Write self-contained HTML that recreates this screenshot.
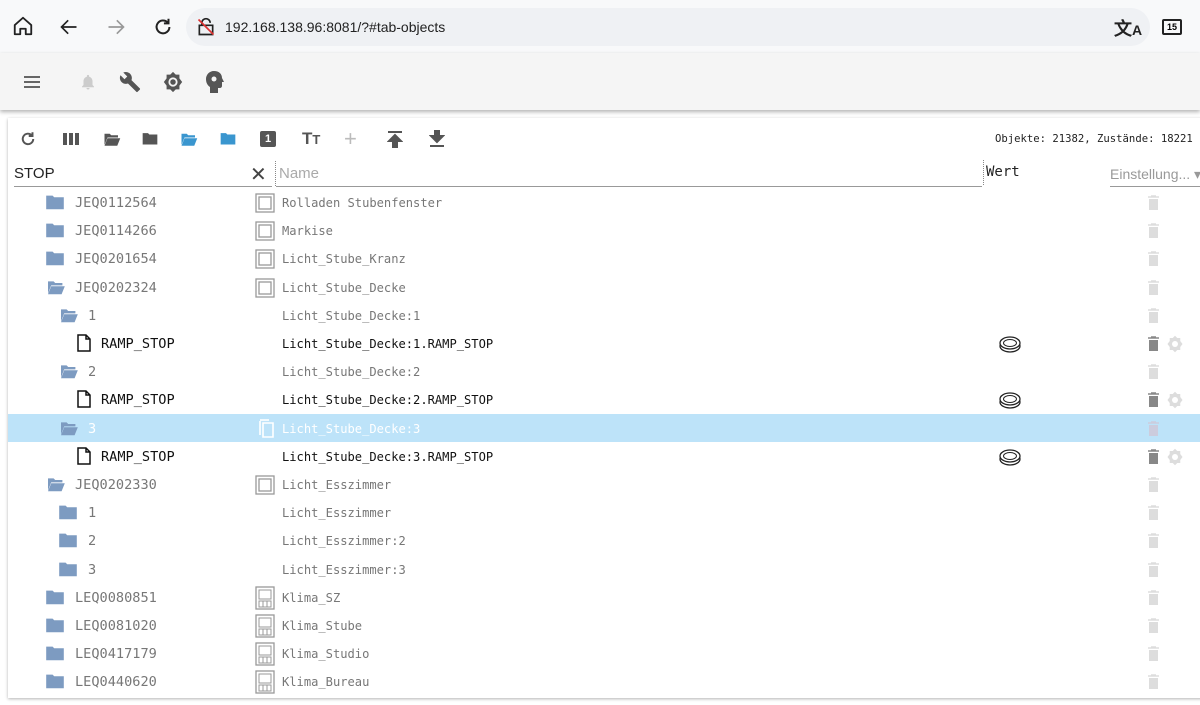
<!DOCTYPE html>
<html><head><meta charset="utf-8"><style>
*{box-sizing:border-box;margin:0;padding:0}
body{width:1200px;height:705px;overflow:hidden;background:#fff;font-family:"Liberation Sans",sans-serif;position:relative}
.a{position:absolute;white-space:nowrap}
.top{left:0;top:0;width:1200px;height:53px;background:#f8f9fa}
.addr{left:186px;top:8px;width:964px;height:38px;background:#eff1f4;border-radius:19px}
.bar{left:0;top:53px;width:1200px;height:57px;background:#f5f5f5;box-shadow:0 2px 4px rgba(0,0,0,.3)}
.card{left:8px;top:118px;width:1200px;height:580px;background:#fff;box-shadow:0 1px 3px rgba(0,0,0,.3)}
.row{position:absolute;left:8px;width:1192px;height:28px}
.t{position:absolute;top:7px;font-family:"DejaVu Sans Mono","Liberation Mono",monospace;font-size:13.6px;color:#777;white-space:nowrap}
.n{position:absolute;left:274px;top:8px;font-family:"DejaVu Sans Mono","Liberation Mono",monospace;font-size:12.1px;color:#777;white-space:nowrap}
.sel{background:#bde3f9}
svg{position:absolute}
</style></head><body>
<div class="a top"></div>
<div class="a addr"></div>
<svg style="left:12px;top:15px" width="22" height="22" viewBox="0 0 24 24"><path d="M3 11L12 3l9 8v10h-6v-6h-6v6H3z" fill="none" stroke="#222" stroke-width="2" stroke-linejoin="round"/></svg>
<svg style="left:59px;top:17px" width="20" height="20" viewBox="0 0 24 24"><path d="M21 12H4M11 4l-8 8 8 8" fill="none" stroke="#222" stroke-width="2"/></svg>
<svg style="left:106px;top:17px" width="20" height="20" viewBox="0 0 24 24"><path d="M3 12h17M13 4l8 8-8 8" fill="none" stroke="#999" stroke-width="2"/></svg>
<svg style="left:152px;top:16px" width="22" height="22" viewBox="0 0 24 24"><path d="M19 12a7 7 0 1 1-2-5M18 3v5h-5" fill="none" stroke="#222" stroke-width="2.2"/></svg>
<svg style="left:196px;top:17px" width="20" height="20" viewBox="0 0 24 24"><path d="M7 10V7a5 5 0 0 1 10 0M4 10h16v11H4z" fill="none" stroke="#222" stroke-width="2"/><path d="M3 3l18 18" stroke="#d33" stroke-width="2"/></svg>
<div class="a" style="left:225px;top:19px;font-size:14px;color:#222">192.168.138.96:8081/?#tab-objects</div>
<div class="a" style="left:1114px;top:15px;font-size:18px;color:#222;font-weight:bold">文<span style="font-size:14px">A</span></div>
<div class="a" style="left:1162px;top:19px;width:20px;height:16px;border:2px solid #222;border-radius:2px;font-size:9px;font-weight:bold;text-align:center;line-height:12px">15</div>
<div class="a bar"></div>
<svg style="left:22px;top:73px" width="20" height="18" viewBox="0 0 20 18"><path d="M2 4h16M2 9h16M2 14h16" stroke="#666" stroke-width="2"/></svg>
<svg style="left:79px;top:72px" width="18" height="20" viewBox="0 0 24 24"><path d="M12 22a2 2 0 0 0 2-2h-4a2 2 0 0 0 2 2zm6-6v-5c0-3-2-5.5-4.5-6V4a1.5 1.5 0 0 0-3 0v1C8 5.5 6 8 6 11v5l-2 2v1h16v-1z" fill="#ccc"/></svg>
<svg style="left:119px;top:71px" width="22" height="22" viewBox="0 0 24 24"><path d="M22.7 19l-9.1-9.1c.9-2.3.4-5-1.5-6.9-2-2-5-2.4-7.4-1.3L9 6 6 9 1.6 4.7C.4 7.1.9 10.1 2.9 12.1c1.9 1.9 4.6 2.4 6.9 1.5l9.1 9.1c.4.4 1 .4 1.4 0l2.3-2.3c.5-.4.5-1.1.1-1.4z" fill="#555"/></svg>
<svg style="left:162px;top:71px" width="22" height="22" viewBox="0 0 24 24"><path d="M12 1l3 3h4v4l3 4-3 4v4h-4l-3 3-3-3H5v-4l-3-4 3-4V4h4z" fill="#555"/><circle cx="12" cy="12" r="5" fill="#f5f5f5"/><circle cx="12" cy="12" r="3" fill="#555"/></svg>
<svg style="left:205px;top:70px" width="20" height="24" viewBox="0 0 20 24"><path d="M9 1c5 0 8 3 8 7l2 4h-2v4c0 1-1 2-2 2h-2v5H5v-6C2 15 1 12 1 9c0-4 3-8 8-8z" fill="#555"/><circle cx="9" cy="9" r="2.5" fill="#f5f5f5"/></svg>
<div class="a card"></div>
<svg style="left:19px;top:130px" width="18" height="18" viewBox="0 0 24 24"><path d="M19 12a7 7 0 1 1-2-5M18 3v5h-5" fill="none" stroke="#555" stroke-width="2.6"/></svg>
<svg style="left:62px;top:131px" width="18" height="16" viewBox="0 0 18 16"><path d="M1 2h4v12H1zM7 2h4v12H7zM13 2h4v12h-4z" fill="#555"/></svg>
<svg style="left:103px;top:131px" width="18" height="16" viewBox="0 0 24 20"><path d="M2 3h7l2 2h9v3H6l-4 10z" fill="#555"/><path d="M6 9h17l-4 10H2z" fill="#555"/></svg>
<svg style="left:142px;top:131px" width="16" height="15" viewBox="0 0 24 20"><path d="M1 2h8l2 2h12v15H1z" fill="#555"/></svg>
<svg style="left:180px;top:131px" width="18" height="16" viewBox="0 0 24 20"><path d="M2 3h7l2 2h9v3H6l-4 10z" fill="#3a96cf"/><path d="M6 9h17l-4 10H2z" fill="#3a96cf"/></svg>
<svg style="left:220px;top:131px" width="16" height="15" viewBox="0 0 24 20"><path d="M1 2h8l2 2h12v15H1z" fill="#3a96cf"/></svg>
<div class="a" style="left:260px;top:131px;width:16px;height:16px;background:#555;border-radius:2px;color:#fff;font-size:11px;font-weight:bold;text-align:center;line-height:16px">1</div>
<div class="a" style="left:302px;top:129px;font-size:17px;font-weight:bold;color:#555">T<span style="font-size:13px">T</span></div>
<div class="a" style="left:344px;top:126px;font-size:22px;color:#bbb">+</div>
<svg style="left:387px;top:130px" width="16" height="18" viewBox="0 0 16 18"><path d="M1 2h14M8 5l-6 6h4v6h4v-6h4z" stroke="#555" stroke-width="2" fill="#555"/></svg>
<svg style="left:429px;top:130px" width="16" height="18" viewBox="0 0 16 18"><path d="M1 16h14M8 12l-6-6h4V1h4v5h4z" stroke="#555" stroke-width="2" fill="#555"/></svg>
<div class="a" style="left:995px;top:133px;font-family:'DejaVu Sans Mono',monospace;font-size:10.6px;color:#222">Objekte: 21382, Zustände: 18221</div>
<div class="a" style="left:14px;top:165px;font-size:15px;color:#222">STOP</div>
<div class="a" style="left:250px;top:162px;font-size:20px;color:#444">✕</div>
<div class="a" style="left:14px;top:186px;width:258px;height:1px;background:#999"></div>
<div class="a" style="left:275px;top:161px;height:25px;border-left:1px dotted #888"></div>
<div class="a" style="left:279px;top:165px;font-size:15px;color:#aaa">Name</div>
<div class="a" style="left:276px;top:186px;width:706px;height:1px;background:#999"></div>
<div class="a" style="left:983px;top:160px;height:25px;border-left:1px dotted #888"></div>
<div class="a" style="left:986px;top:164px;font-family:'DejaVu Sans Mono',monospace;font-size:14px;color:#222">Wert</div>
<div class="a" style="left:1110px;top:166px;font-size:14px;color:#999">Einstellung... ▾</div>
<div class="a" style="left:1110px;top:186px;width:90px;height:1px;background:#999"></div>
<div id="rows"></div>
<script>
var F='<svg style="left:LEFTpx;top:6px" width="20" height="16" viewBox="0 0 24 20"><path d="M1 2h8l2 2h12v15H1z" fill="#7d9bc1"/></svg>';
var O='<svg style="left:LEFTpx;top:6px" width="22" height="16" viewBox="0 0 24 20"><path d="M2 3h7l2 2h9v3H6l-4 10z" fill="#7d9bc1"/><path d="M6 9h17l-4 10H2z" fill="#7d9bc1"/></svg>';
var FI='<svg style="left:68px;top:5px" width="16" height="18" viewBox="0 0 16 18"><path d="M2 1h8l4 4v12H2zM10 1v4h4" fill="none" stroke="#111" stroke-width="1.5"/></svg>';
var BOX='<svg style="left:247px;top:5px" width="20" height="20" viewBox="0 0 20 20"><rect x="1" y="1" width="18" height="18" fill="none" stroke="#999" stroke-width="1.3"/><rect x="4" y="4" width="12" height="12" fill="none" stroke="#999" stroke-width="1.3"/></svg>';
var KL='<svg style="left:247px;top:3px" width="20" height="24" viewBox="0 0 20 24"><rect x="1" y="1" width="18" height="22" fill="none" stroke="#999" stroke-width="1.3"/><rect x="4" y="4" width="12" height="9" fill="none" stroke="#999"/><path d="M4 15h12v6H4zM8 15v6M12 15v6" fill="none" stroke="#999"/></svg>';
var CP='<svg style="left:249px;top:5px" width="18" height="20" viewBox="0 0 18 20"><path d="M6 4h10v14H6zM3 2v14" fill="none" stroke="#fff" stroke-width="1.6"/><path d="M3 1h9" stroke="#fff" stroke-width="1.6"/></svg>';
var BT='<svg style="left:990px;top:6px" width="24" height="18" viewBox="0 0 24 18"><ellipse cx="12" cy="11" rx="10" ry="6" fill="none" stroke="#222" stroke-width="1.3"/><ellipse cx="12" cy="8" rx="10" ry="6" fill="#fff" stroke="#222" stroke-width="1.3"/><ellipse cx="12" cy="8" rx="6.5" ry="3.5" fill="none" stroke="#222"/></svg>';
function TR(c){return '<svg style="left:1139px;top:7px" width="13" height="15" viewBox="0 0 13 15"><path d="M1 2h11M4 1h5" stroke="'+c+'" stroke-width="1.4"/><path d="M2 4h9v11H2z" fill="'+c+'"/></svg>';}
var GR='<svg style="left:1158px;top:6px" width="18" height="18" viewBox="0 0 24 24"><path d="M12 1l3 3h4v4l3 4-3 4v4h-4l-3 3-3-3H5v-4l-3-4 3-4V4h4z" fill="#ddd"/><circle cx="12" cy="12" r="4" fill="#fff"/></svg>';
var R=[
['F',37,67,'JEQ0112564','BOX','Rolladen Stubenfenster'],
['F',37,67,'JEQ0114266','BOX','Markise'],
['F',37,67,'JEQ0201654','BOX','Licht_Stube_Kranz'],
['O',37,67,'JEQ0202324','BOX','Licht_Stube_Decke'],
['O',50,80,'1','','Licht_Stube_Decke:1'],
['FI',0,93,'RAMP_STOP','','Licht_Stube_Decke:1.RAMP_STOP',1],
['O',50,80,'2','','Licht_Stube_Decke:2'],
['FI',0,93,'RAMP_STOP','','Licht_Stube_Decke:2.RAMP_STOP',1],
['O',50,80,'3','CP','Licht_Stube_Decke:3',2],
['FI',0,93,'RAMP_STOP','','Licht_Stube_Decke:3.RAMP_STOP',1],
['O',37,67,'JEQ0202330','BOX','Licht_Esszimmer'],
['F',50,80,'1','','Licht_Esszimmer'],
['F',50,80,'2','','Licht_Esszimmer:2'],
['F',50,80,'3','','Licht_Esszimmer:3'],
['F',37,67,'LEQ0080851','KL','Klima_SZ'],
['F',37,67,'LEQ0081020','KL','Klima_Stube'],
['F',37,67,'LEQ0417179','KL','Klima_Studio'],
['F',37,67,'LEQ0440620','KL','Klima_Bureau']];
var h='';
R.forEach(function(r,i){
 var top=Math.round(188+i*28.2), s=r[6]==2, st=r[6]==1;
 var ic=r[0]=='F'?F.replace('LEFT',r[1]):r[0]=='O'?O.replace('LEFT',r[1]):FI;
 var ic2=r[4]=='BOX'?BOX:r[4]=='KL'?KL:r[4]=='CP'?CP:'';
 var col=s?'#fff':st?'#111':'#777';
 h+='<div class="row'+(s?' sel':'')+'" style="top:'+top+'px">'+ic+'<div class="t" style="left:'+r[2]+'px;color:'+col+'">'+r[3]+'</div>'+ic2+'<div class="n" style="color:'+col+'">'+r[5]+'</div>'+(st?BT+TR('#888')+GR:TR(s?'#ccd':'#ddd'))+'</div>';
});
document.getElementById('rows').innerHTML=h;
</script>
</body></html>
